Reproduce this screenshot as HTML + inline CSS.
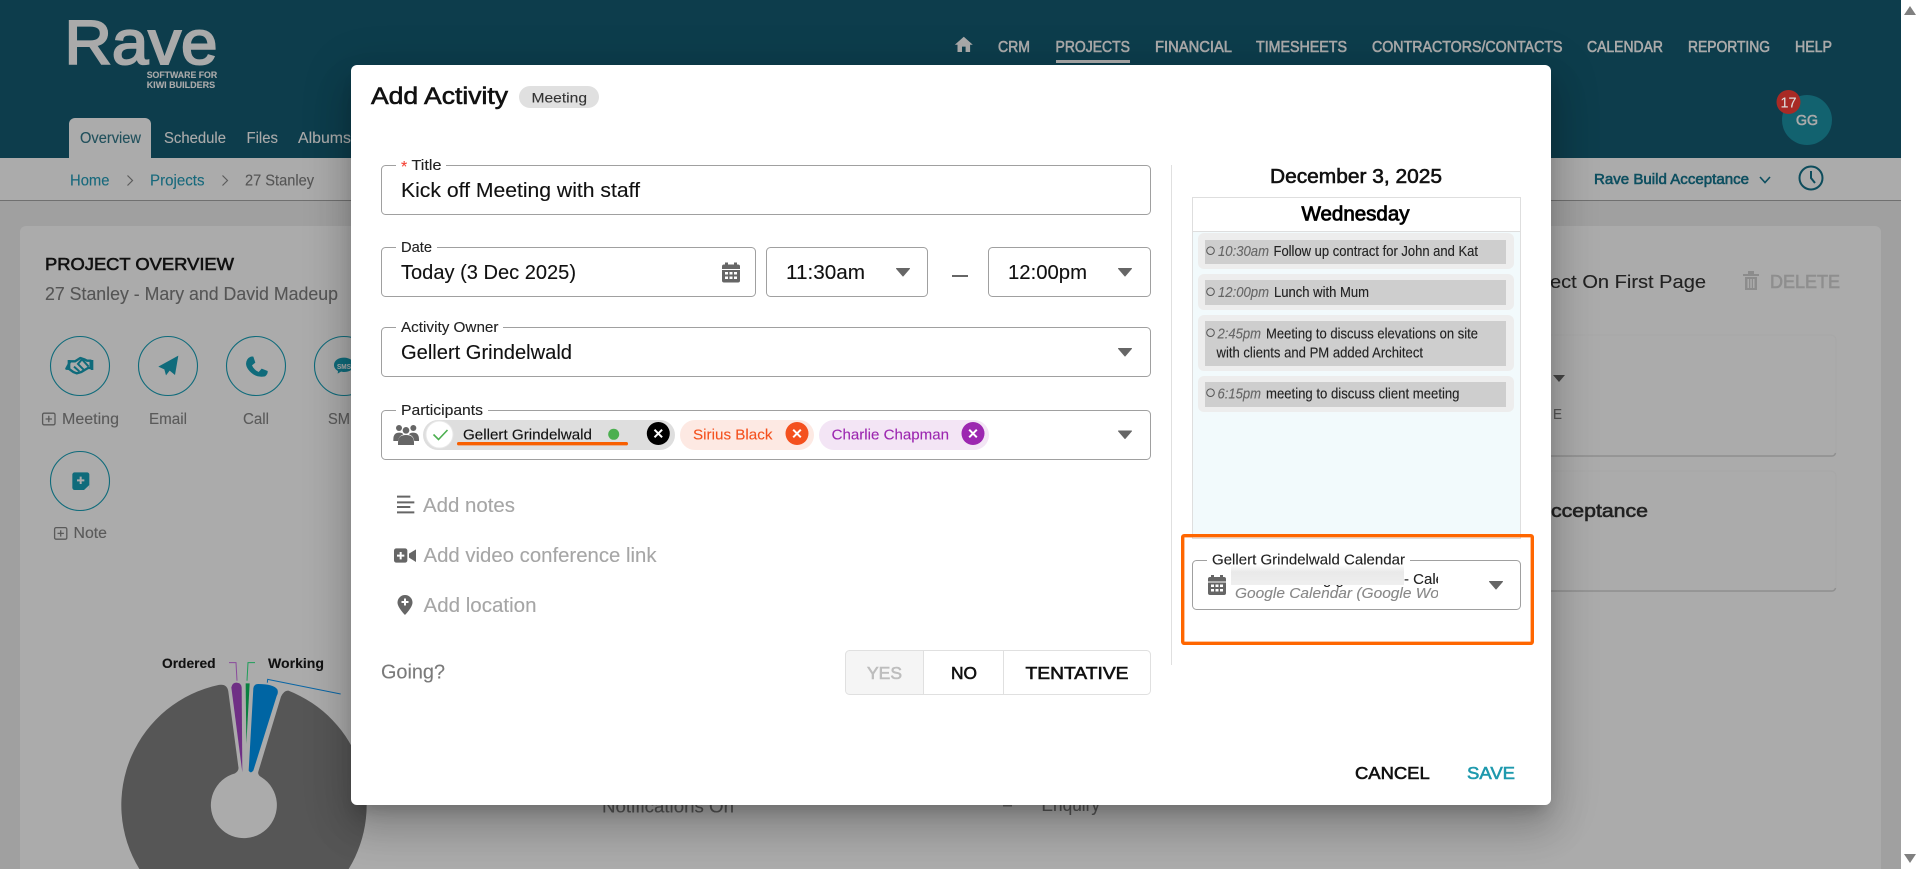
<!DOCTYPE html>
<html lang="en"><head><meta charset="utf-8"><title>Add Activity</title>
<style>
html,body{margin:0;padding:0;width:1920px;height:869px;overflow:hidden;background:#a0a0a0}
svg{position:absolute;left:0;top:0;display:block}
text{font-family:"Liberation Sans",Arial,sans-serif;fill:currentColor;white-space:pre;stroke:currentColor;stroke-width:.12px}
.m{stroke-width:.6px}
#shadow{position:absolute;left:351px;top:65px;width:1200px;height:740px;border-radius:6px;box-shadow:0 11px 15px -7px rgba(0,0,0,.2),0 24px 38px 3px rgba(0,0,0,.14),0 9px 46px 8px rgba(0,0,0,.12)}
#bar{position:absolute;left:1901px;top:0;width:19px;height:869px;background:#fff}
</style></head><body>
<svg width="1920" height="869" viewBox="0 0 1920 869">
<rect width="1920" height="869" fill="#a0a0a0"/>
<rect width="1901" height="158" fill="#0d3d4c"/>
<rect y="158" width="1901" height="42" fill="#ababab"/>
<rect y="200" width="1901" height="1" fill="#707070"/>
<path d="M20 869V232a6 6 0 0 1 6-6h1849a6 6 0 0 1 6 6v637z" fill="#ababab"/>
<g color="#aaa">
<text x="64.5" y="64" font-size="62.5" style="stroke-width:2px" textLength="153" lengthAdjust="spacingAndGlyphs">Rave</text>
<text x="146.7" y="78" font-size="9" font-weight="700" textLength="70.5" lengthAdjust="spacingAndGlyphs">SOFTWARE FOR</text>
<text x="146.7" y="88" font-size="9" font-weight="700" textLength="68.5" lengthAdjust="spacingAndGlyphs">KIWI BUILDERS</text>
<path transform="translate(953 34) scale(.9)" d="M10 20v-6h4v6h5v-8h3L12 3 2 12h3v8z" fill="#aaa"/>
<text class="m" x="998" y="52" font-size="15.5" textLength="32" lengthAdjust="spacingAndGlyphs">CRM</text>
<text class="m" x="1055.5" y="52" font-size="15.5" textLength="74.5" lengthAdjust="spacingAndGlyphs">PROJECTS</text>
<rect x="1056" y="60" width="74" height="3" fill="#aaa"/>
<text class="m" x="1155" y="52" font-size="15.5" textLength="77" lengthAdjust="spacingAndGlyphs">FINANCIAL</text>
<text class="m" x="1256" y="52" font-size="15.5" textLength="91" lengthAdjust="spacingAndGlyphs">TIMESHEETS</text>
<text class="m" x="1372" y="52" font-size="15.5" textLength="190.5" lengthAdjust="spacingAndGlyphs">CONTRACTORS/CONTACTS</text>
<text class="m" x="1587" y="52" font-size="15.5" textLength="76" lengthAdjust="spacingAndGlyphs">CALENDAR</text>
<text class="m" x="1688" y="52" font-size="15.5" textLength="82" lengthAdjust="spacingAndGlyphs">REPORTING</text>
<text class="m" x="1795" y="52" font-size="15.5" textLength="37" lengthAdjust="spacingAndGlyphs">HELP</text>
</g>
<path d="M69 158V124a6 6 0 0 1 6-6h70a6 6 0 0 1 6 6v34z" fill="#ababab"/>
<text x="80" y="143" font-size="16" color="#21505c" textLength="61" lengthAdjust="spacingAndGlyphs">Overview</text>
<g color="#aaa">
<text x="164" y="143" font-size="16" textLength="62" lengthAdjust="spacingAndGlyphs">Schedule</text>
<text x="246.5" y="143" font-size="16" textLength="31.5" lengthAdjust="spacingAndGlyphs">Files</text>
<text x="298" y="143" font-size="16" textLength="53" lengthAdjust="spacingAndGlyphs">Albums</text>
</g>
<circle cx="1807" cy="120" r="25" fill="#12626f"/>
<text class="m" x="1796" y="125" font-size="14.5" color="#aaa" textLength="22" lengthAdjust="spacingAndGlyphs">GG</text>
<circle cx="1788.5" cy="102" r="12" fill="#a82a25"/>
<text x="1780.5" y="107.5" font-size="15" color="#ddd" textLength="16" lengthAdjust="spacingAndGlyphs">17</text>
<text x="70" y="185.5" font-size="16" color="#17697c" textLength="39.5" lengthAdjust="spacingAndGlyphs">Home</text>
<path d="M127.5 175.5l5 5-5 5M222.5 175.5l5 5-5 5" fill="none" stroke="#5c5c5c" stroke-width="1.2"/>
<text x="150" y="185.5" font-size="16" color="#17697c" textLength="54.5" lengthAdjust="spacingAndGlyphs">Projects</text>
<text x="245" y="185.5" font-size="16" color="#555" textLength="69" lengthAdjust="spacingAndGlyphs">27 Stanley</text>
<text class="m" x="1594" y="184" font-size="15" color="#0e4f60" textLength="155" lengthAdjust="spacingAndGlyphs">Rave Build Acceptance</text>
<path d="M1760 177l5 5.5 5-5.5" fill="none" stroke="#0e4f60" stroke-width="1.6"/>
<circle cx="1811" cy="178" r="11.5" fill="none" stroke="#0d4c5c" stroke-width="2"/>
<path d="M1811 171v7l4 5" fill="none" stroke="#0d4c5c" stroke-width="2"/>
<text class="m" x="45" y="270" font-size="17.5" color="#111" textLength="189" lengthAdjust="spacingAndGlyphs">PROJECT OVERVIEW</text>
<text x="45" y="300" font-size="18.5" color="#555" textLength="293" lengthAdjust="spacingAndGlyphs">27 Stanley - Mary and David Madeup</text>
<g fill="none" stroke="#0f6b7b" stroke-width="1.1">
<circle cx="80" cy="366" r="29.5"/><circle cx="168" cy="366" r="29.5"/><circle cx="256" cy="366" r="29.5"/><circle cx="344" cy="366" r="29.5"/><circle cx="80" cy="481" r="29.5"/>
</g>
<g transform="translate(20 320) scale(.33333)" fill="#0f6b7b">
<rect x="143" y="120" width="8" height="30"/><rect x="212" y="120" width="8" height="30"/>
<path d="M151 124h14l16-10 12 4 8 4h11v22h-8l-20 12-14 4-10-4-14-10h-7z" fill="none" stroke="#0f6b7b" stroke-width="7" stroke-linejoin="round"/>
<path d="M172 134l14-16 20 22M162 140l16 14M176 134l18 18" fill="none" stroke="#0f6b7b" stroke-width="6"/>
<path d="M475 107L415 140l18 8 5 18 11-14 16 13z"/>
<path d="M682 118q8-10 18-8l6 18-10 8q6 14 20 20l9-10 18 7q1 10-8 16q-30 6-50-20q-12-16-3-31z"/>
<path d="M972 113c-17 0-30 9-30 22 0 8 5 14 12 18l-1 8 10-6c3 1 6 1 9 1 17 0 30-9 30-21s-13-22-30-22z"/>
<rect x="157" y="457" width="51" height="53" rx="7"/>
<path d="M192 510l16-15v15z" fill="#ababab"/>
<path d="M182 470v22M171 481h22" stroke="#ababab" stroke-width="6"/>
</g>
<text x="337" y="369" font-size="7" font-weight="700" color="#ababab" textLength="14" lengthAdjust="spacingAndGlyphs">SMS</text>
<g fill="none" stroke="#5a5a5a" stroke-width="1.3">
<rect x="42.6" y="413.2" width="12.4" height="11.6" rx="1.5"/><path d="M48.8 415.8v6.4M45.6 419h6.4"/>
<rect x="54.6" y="527.6" width="12.2" height="11.6" rx="1.5"/><path d="M60.7 530.2v6.4M57.5 533.4h6.4"/>
</g>
<g font-size="15.5" color="#5a5a5a">
<text x="62" y="424" textLength="57" lengthAdjust="spacingAndGlyphs">Meeting</text>
<text x="149" y="424" textLength="38" lengthAdjust="spacingAndGlyphs">Email</text>
<text x="243" y="424" textLength="26" lengthAdjust="spacingAndGlyphs">Call</text>
<text x="328" y="424" textLength="22" lengthAdjust="spacingAndGlyphs">SM</text>
<text x="73.5" y="538" textLength="33.5" lengthAdjust="spacingAndGlyphs">Note</text>
</g>
<svg x="100" y="640" width="280" height="229" viewBox="0 0 840 687">
<path d="M357 134.7A368 368 0 0 0 118 687H746A368 368 0 0 0 565 152Q552 151 543 170L475 395Q472 405 485 412A99 99 0 1 1 405 400Q418 392 415 380L385 155Q382 131 357 134.7Z" fill="#565656"/>
<path d="M394 142Q397 128 410 128Q424 130 425 142L427 397Z" fill="#6f2f85"/>
<path d="M437 130h12L439 312Z" fill="#0a8040"/>
<path d="M460 145Q462 132 475 132Q520 132 532 148Q536 158 530 168L460 392Q452 402 446 392Z" fill="#0065a3"/>
<path d="M387 68h21l3 54" fill="none" stroke="#8a4a9c" stroke-width="3"/>
<path d="M465 68h-21l-3 54" fill="none" stroke="#1e9e5a" stroke-width="3"/>
<path d="M502 128l1-10 219 44" fill="none" stroke="#0a66a5" stroke-width="3"/>
</svg>
<text x="162" y="668" font-size="14" font-weight="700" color="#111" textLength="53.5" lengthAdjust="spacingAndGlyphs">Ordered</text>
<text x="268" y="668" font-size="14" font-weight="700" color="#111" textLength="56" lengthAdjust="spacingAndGlyphs">Working</text>
<text x="602" y="812.5" font-size="18" color="#555" textLength="132" lengthAdjust="spacingAndGlyphs">Notifications On</text>
<text x="1041.5" y="811" font-size="18" color="#555" textLength="58.5" lengthAdjust="spacingAndGlyphs">Enquiry</text>
<rect x="1003" y="805" width="9" height="1.5" fill="#666"/>
<text x="1550" y="288" font-size="18.5" color="#222" textLength="156" lengthAdjust="spacingAndGlyphs">ect On First Page</text>
<g fill="#8c8c8c"><rect x="1743" y="274" width="16" height="2"/><rect x="1748" y="271" width="6" height="3"/><path d="M1745 277h12v13h-12zM1747.5 279v9h1.5v-9zM1750.3 279v9h1.5v-9zM1753 279v9h1.5v-9z" fill-rule="evenodd"/></g>
<text class="m" x="1770" y="288" font-size="18" color="#8e8e8e" textLength="70" lengthAdjust="spacingAndGlyphs">DELETE</text>
<path d="M1400 456.5H1832a4 4 0 0 0 4-4V340a5 5 0 0 0-5-5H1400z" fill="#ababab" stroke="#a7a7a7"/>
<path d="M1400 456h432a4 4 0 0 0 3.5-3" fill="none" stroke="#8f8f8f" stroke-width="1.5"/>
<path d="M1400 591.5H1832a4 4 0 0 0 4-4V476a5 5 0 0 0-5-5H1400z" fill="#ababab" stroke="#a7a7a7"/>
<path d="M1400 591h432a4 4 0 0 0 3.5-3" fill="none" stroke="#8f8f8f" stroke-width="1.5"/>
<path d="M1553 375h12l-6 7z" fill="#444"/>
<text x="1553" y="419" font-size="15" color="#555" textLength="9" lengthAdjust="spacingAndGlyphs">E</text>
<text class="m" x="1551" y="517" font-size="18.5" color="#222" textLength="97" lengthAdjust="spacingAndGlyphs">cceptance</text>
</svg>
<div id="shadow"></div>
<svg width="1920" height="869" viewBox="0 0 1920 869">
<defs>
<clipPath id="c"><rect x="1230" y="565" width="208" height="40"/></clipPath>
<linearGradient id="b" x1="0" y1="0" x2="0" y2="1"><stop offset="0" stop-color="#fdfdfd"/><stop offset=".35" stop-color="#e9e9e9"/><stop offset="1" stop-color="#efefef"/></linearGradient>
<g id="cal" fill="#666"><rect y="2" width="18" height="18" rx="2"/><rect x="3" width="3" height="4"/><rect x="12" width="3" height="4"/><g fill="#fff"><rect x="0" y="6.5" width="18" height="1"/><rect x="3" y="9.5" width="3" height="2.5"/><rect x="7.5" y="9.5" width="3" height="2.5"/><rect x="12" y="9.5" width="3" height="2.5"/><rect x="3" y="14" width="3" height="2.5"/><rect x="7.5" y="14" width="3" height="2.5"/><rect x="12" y="14" width="3" height="2.5"/></g></g>
<path id="dd" d="M-6.5-3.5h13L0 4z" fill="#666" stroke="#666" stroke-width="1" stroke-linejoin="round"/>
</defs>
<rect x="351" y="65" width="1200" height="740" rx="6" fill="#fff"/>
<text class="m" x="371" y="104" font-size="24" color="#111" textLength="137" lengthAdjust="spacingAndGlyphs">Add Activity</text>
<rect x="519" y="86" width="80" height="22" rx="11" fill="#e0e0e0"/>
<text x="531.5" y="102.7" font-size="14" color="#333" textLength="55.5" lengthAdjust="spacingAndGlyphs">Meeting</text>
<g fill="#fff" stroke="#a0a0a0">
<rect x="381.5" y="165.5" width="769" height="49" rx="4"/>
<rect x="381.5" y="247.5" width="374" height="49" rx="4"/>
<rect x="766.5" y="247.5" width="161" height="49" rx="4"/>
<rect x="988.5" y="247.5" width="162" height="49" rx="4"/>
<rect x="381.5" y="327.5" width="769" height="49" rx="4"/>
<rect x="381.5" y="410.5" width="769" height="49" rx="4"/>
</g>
<g fill="#fff"><rect x="396" y="160" width="50" height="10"/><rect x="396" y="242" width="41" height="10"/><rect x="396" y="322" width="107" height="10"/><rect x="396" y="405" width="92" height="10"/></g>
<text x="401" y="172" font-size="16" color="#f44336">*</text>
<g font-size="14.3" color="#222">
<text x="411.5" y="170" textLength="30" lengthAdjust="spacingAndGlyphs">Title</text>
<text x="401" y="252" textLength="31" lengthAdjust="spacingAndGlyphs">Date</text>
<text x="401" y="332" textLength="97.5" lengthAdjust="spacingAndGlyphs">Activity Owner</text>
<text x="401" y="415" textLength="82" lengthAdjust="spacingAndGlyphs">Participants</text>
</g>
<g font-size="20" color="#111">
<text x="401" y="197" textLength="239" lengthAdjust="spacingAndGlyphs">Kick off Meeting with staff</text>
<text x="401" y="279" textLength="175" lengthAdjust="spacingAndGlyphs">Today (3 Dec 2025)</text>
<text x="786" y="279" textLength="79" lengthAdjust="spacingAndGlyphs">11:30am</text>
<text x="1008" y="279" textLength="79" lengthAdjust="spacingAndGlyphs">12:00pm</text>
<text x="401" y="359" textLength="171" lengthAdjust="spacingAndGlyphs">Gellert Grindelwald</text>
</g>
<use href="#cal" x="722" y="262.5"/>
<use href="#dd" x="903" y="272"/><use href="#dd" x="1125" y="272"/><use href="#dd" x="1125" y="352"/><use href="#dd" x="1125" y="434.5"/>
<rect x="952" y="275" width="16" height="2" fill="#666"/>
<g transform="translate(370 390) scale(.33333)" fill="#666">
<circle cx="87" cy="114" r="9"/><circle cx="130" cy="114" r="9"/><circle cx="108" cy="121" r="10"/>
<path d="M70 148q0-20 18-20 8 0 12 5-14 5-16 20h-14zM147 148q0-20-18-20-8 0-12 5 14 5 16 20h14z"/>
<path d="M84 165v-8q0-22 24-22t24 22v8z"/>
<path d="M81 320h40M81 337h52M81 351h40M81 367h52" stroke="#666" stroke-width="6"/>
<rect x="72" y="475" width="40" height="43" rx="7"/><path d="M117 491l21-13v38l-21-13z"/>
<path d="M92 486v22M81 497h22" stroke="#fff" stroke-width="6"/>
</g>
<rect x="423" y="420" width="252" height="30" rx="15" fill="#dedede"/>
<circle cx="439.5" cy="434.5" r="13.5" fill="#fff" stroke="#e8e8e8"/>
<path d="M433.5 434.5l5 5 9-9.5" fill="none" stroke="#4caf50" stroke-width="1.6"/>
<text x="463" y="439.3" font-size="14.5" color="#111" textLength="129" lengthAdjust="spacingAndGlyphs">Gellert Grindelwald</text>
<circle cx="613.7" cy="434.3" r="5.5" fill="#4caf50"/>
<circle cx="658.3" cy="433.5" r="11.5" fill="#000"/>
<path d="M654.5 429.7l7.6 7.6M662.1 429.7l-7.6 7.6" stroke="#fff" stroke-width="2"/>
<rect x="457" y="442" width="171" height="3.4" rx="1.7" fill="#f85f00"/>
<rect x="680" y="420" width="134" height="30" rx="15" fill="#fde9e3"/>
<text x="693" y="439.3" font-size="14.5" color="#f4511e" textLength="79.5" lengthAdjust="spacingAndGlyphs">Sirius Black</text>
<circle cx="797" cy="433.5" r="11.5" fill="#f4511e"/>
<path d="M793.2 429.7l7.6 7.6M800.8 429.7l-7.6 7.6" stroke="#fff" stroke-width="2"/>
<rect x="819" y="420" width="170" height="30" rx="15" fill="#f3e5f5"/>
<text x="831.6" y="439.3" font-size="14.5" color="#9c27b0" textLength="117.4" lengthAdjust="spacingAndGlyphs">Charlie Chapman</text>
<circle cx="973" cy="433.5" r="11.5" fill="#9c27b0"/>
<path d="M969.2 429.7l7.6 7.6M976.8 429.7l-7.6 7.6" stroke="#fff" stroke-width="2"/>
<path d="M405 595a7.5 7.5 0 0 0-7.5 7.5c0 5 7.5 12.5 7.5 12.5s7.5-7.5 7.5-12.5A7.5 7.5 0 0 0 405 595z" fill="#666"/>
<path d="M405 598.5v7M401.5 602h7" stroke="#fff" stroke-width="2"/>
<g font-size="20" color="#a6a6a6">
<text x="423" y="512" textLength="92" lengthAdjust="spacingAndGlyphs">Add notes</text>
<text x="423.5" y="562" textLength="233" lengthAdjust="spacingAndGlyphs">Add video conference link</text>
<text x="423.5" y="612" textLength="113" lengthAdjust="spacingAndGlyphs">Add location</text>
</g>
<text x="381" y="678.3" font-size="20" color="#7a7a7a" textLength="64" lengthAdjust="spacingAndGlyphs">Going?</text>
<path d="M923 650.5H849.5a4 4 0 0 0-4 4v36a4 4 0 0 0 4 4H923z" fill="#f5f5f5"/>
<rect x="845.5" y="650.5" width="305" height="44" rx="4" fill="none" stroke="#e0e0e0"/>
<path d="M923.5 650v45M1003.5 650v45" stroke="#e0e0e0"/>
<text class="m" x="867" y="679" font-size="17.5" color="#bdbdbd" textLength="35" lengthAdjust="spacingAndGlyphs">YES</text>
<text class="m" x="951" y="679" font-size="17.5" color="#111" textLength="26" lengthAdjust="spacingAndGlyphs">NO</text>
<text class="m" x="1025.5" y="679" font-size="17.5" color="#111" textLength="103" lengthAdjust="spacingAndGlyphs">TENTATIVE</text>
<text class="m" x="1355" y="779" font-size="17.5" color="#111" textLength="74.7" lengthAdjust="spacingAndGlyphs">CANCEL</text>
<text class="m" x="1467" y="779" font-size="17.5" color="#1e99ad" textLength="48" lengthAdjust="spacingAndGlyphs">SAVE</text>
<rect x="1171" y="165" width="1" height="500" fill="#e0e0e0"/>
<text class="m" x="1270" y="183" font-size="20" color="#111" textLength="172" lengthAdjust="spacingAndGlyphs">December 3, 2025</text>
<rect x="1192.5" y="197.5" width="328" height="341" fill="#f2fafc" stroke="#dedede"/>
<rect x="1193" y="198" width="327" height="33" fill="#fff"/>
<rect x="1193" y="231" width="327" height="1" fill="#dedede"/>
<text x="1301.5" y="220.7" font-size="20" color="#000" style="stroke-width:.8px" textLength="108" lengthAdjust="spacingAndGlyphs">Wednesday</text>
<g fill="#ededed"><rect x="1198" y="233" width="316" height="36" rx="6"/><rect x="1198" y="274" width="316" height="36" rx="6"/><rect x="1198" y="315" width="316" height="56" rx="6"/><rect x="1198" y="376" width="316" height="36" rx="6"/></g>
<g fill="#cecece"><rect x="1205" y="240" width="301" height="24"/><rect x="1205" y="280" width="301" height="25"/><rect x="1205" y="321" width="301" height="45"/><rect x="1205" y="382" width="301" height="25"/></g>
<g fill="none" stroke="#555"><circle cx="1210.5" cy="250.7" r="3.8"/><circle cx="1210.5" cy="291.7" r="3.8"/><circle cx="1210.5" cy="332.7" r="3.8"/><circle cx="1210.5" cy="392.7" r="3.8"/></g>
<g font-size="14.3" font-style="italic" color="#666">
<text x="1218" y="256" textLength="51" lengthAdjust="spacingAndGlyphs">10:30am</text>
<text x="1218" y="297" textLength="51" lengthAdjust="spacingAndGlyphs">12:00pm</text>
<text x="1217.5" y="338.3" textLength="43.5" lengthAdjust="spacingAndGlyphs">2:45pm</text>
<text x="1217.5" y="398.3" textLength="43.5" lengthAdjust="spacingAndGlyphs">6:15pm</text>
</g>
<g font-size="14.3" color="#222">
<text x="1273.5" y="256" textLength="204.5" lengthAdjust="spacingAndGlyphs">Follow up contract for John and Kat</text>
<text x="1274" y="297" textLength="95" lengthAdjust="spacingAndGlyphs">Lunch with Mum</text>
<text x="1266" y="338.3" textLength="212" lengthAdjust="spacingAndGlyphs">Meeting to discuss elevations on site</text>
<text x="1216.5" y="357.3" textLength="206.5" lengthAdjust="spacingAndGlyphs">with clients and PM added Architect</text>
<text x="1266" y="398.3" textLength="193.5" lengthAdjust="spacingAndGlyphs">meeting to discuss client meeting</text>
</g>
<rect x="1192.5" y="560.5" width="328" height="49" rx="4" fill="#fff" stroke="#a0a0a0"/>
<rect x="1207" y="555" width="203" height="10" fill="#fff"/>
<text x="1212" y="564.5" font-size="14.3" color="#222" textLength="193" lengthAdjust="spacingAndGlyphs">Gellert Grindelwald Calendar</text>
<use href="#cal" x="1208" y="575"/>
<g clip-path="url(#c)">
<text x="1404" y="584" font-size="15" color="#222">- Calendar</text>
<text x="1323" y="584" font-size="15" color="#222">g g</text>
<text x="1235" y="598" font-size="15" font-style="italic" color="#888" textLength="204" lengthAdjust="spacingAndGlyphs">Google Calendar (Google Wo</text>
</g>
<rect x="1231" y="565" width="173" height="20" fill="url(#b)"/>
<use href="#dd" x="1496" y="585"/>
<rect x="1182.7" y="535.7" width="349.6" height="107.6" rx="1.5" fill="none" stroke="#ff6600" stroke-width="3.4"/>
</svg>
<div id="bar"></div>
<svg width="1920" height="869" viewBox="0 0 1920 869" style="pointer-events:none">
<path d="M1910 6l6 9h-12zM1910 863l6-9h-12z" fill="#808080"/>
</svg>
</body></html>
